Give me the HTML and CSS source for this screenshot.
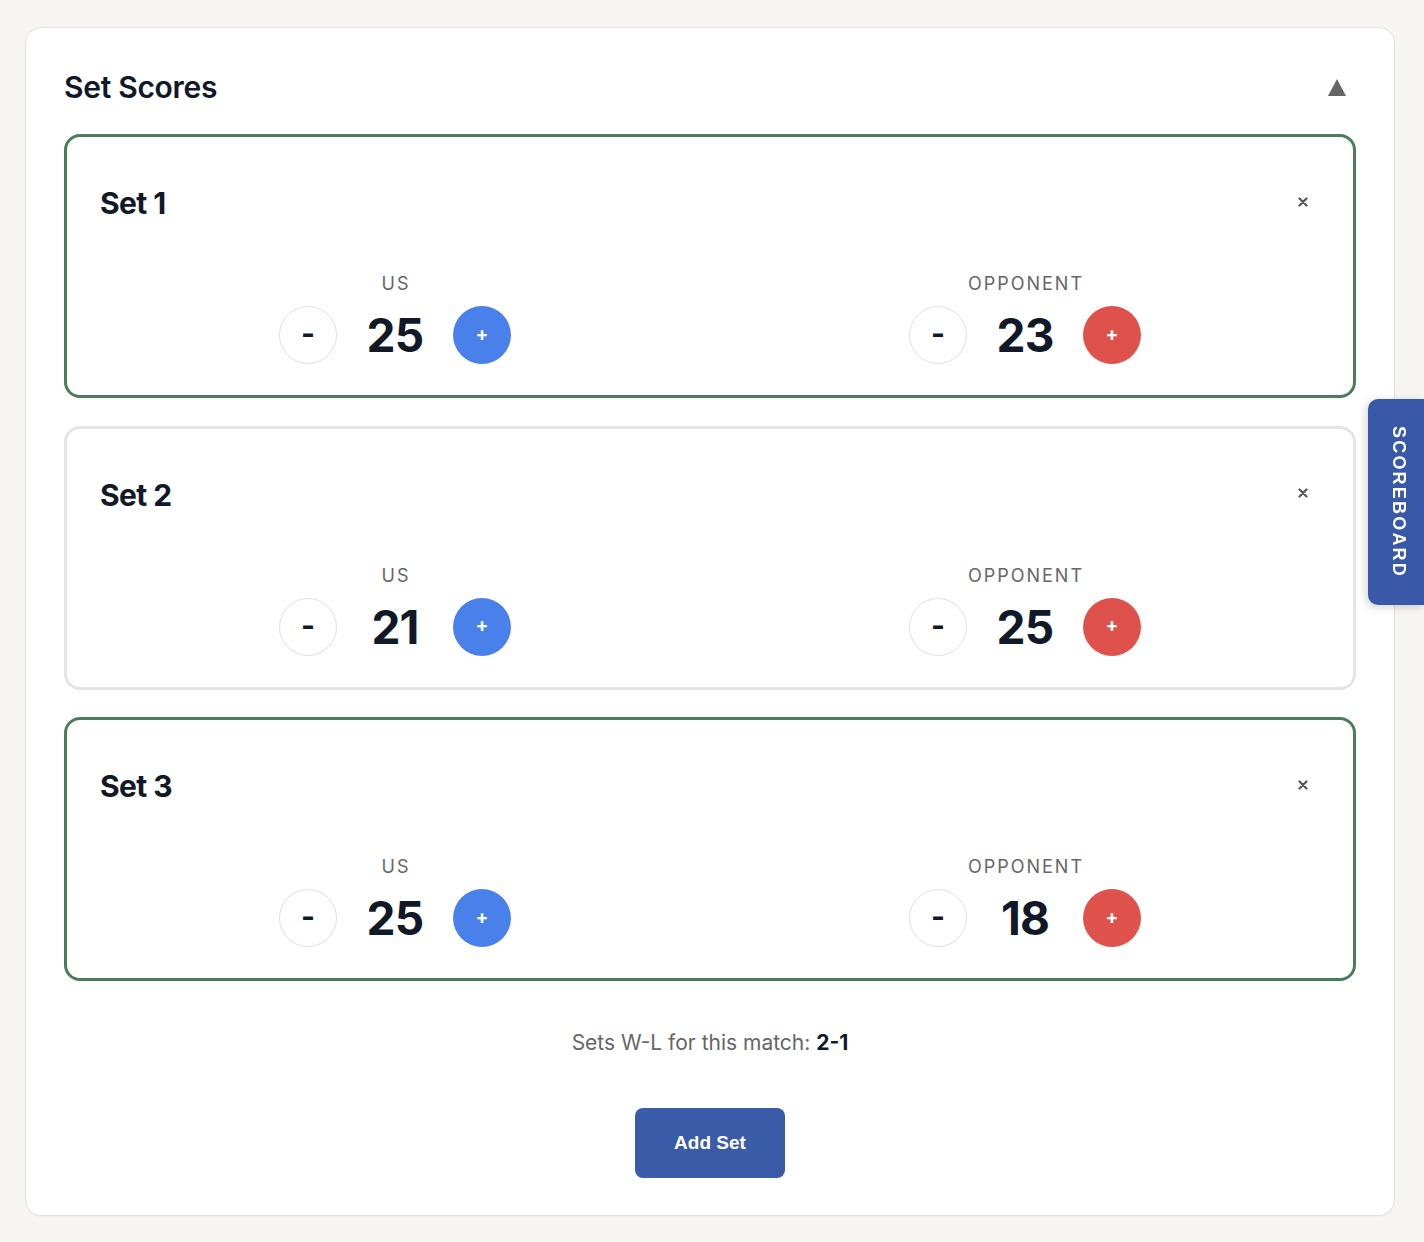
FILE: index.html
```html
<!DOCTYPE html>
<html lang="en">
<head>
<meta charset="utf-8">
<title>Set Scores</title>
<link rel="stylesheet" href="styles.css">
</head>
<body>
<main class="panel">
  <div class="panel-head">
    <h2 class="panel-title">Set Scores</h2>
    <button class="collapse-btn" aria-label="Collapse">
      <svg width="18" height="17" viewBox="0 0 18 17"><polygon points="9,0 18,17 0,17" fill="#666"/></svg>
    </button>
  </div>

  <section class="set-card won">
    <div class="set-head">
      <h3 class="set-title">Set 1</h3>
      <button class="close-btn" aria-label="Remove set"><svg width="10" height="10" viewBox="0 0 10 10"><path d="M1.5 1.5 L8.5 8.5 M8.5 1.5 L1.5 8.5" stroke="#555" stroke-width="2.2" stroke-linecap="round"/></svg></button>
    </div>
    <div class="teams">
      <div class="team">
        <div class="team-label">US</div>
        <div class="controls"><button class="btn-minus">-</button><span class="score">25</span><button class="btn-plus blue">+</button></div>
      </div>
      <div class="team">
        <div class="team-label">OPPONENT</div>
        <div class="controls"><button class="btn-minus">-</button><span class="score">23</span><button class="btn-plus red">+</button></div>
      </div>
    </div>
  </section>

  <section class="set-card">
    <div class="set-head">
      <h3 class="set-title">Set 2</h3>
      <button class="close-btn" aria-label="Remove set"><svg width="10" height="10" viewBox="0 0 10 10"><path d="M1.5 1.5 L8.5 8.5 M8.5 1.5 L1.5 8.5" stroke="#555" stroke-width="2.2" stroke-linecap="round"/></svg></button>
    </div>
    <div class="teams">
      <div class="team">
        <div class="team-label">US</div>
        <div class="controls"><button class="btn-minus">-</button><span class="score">21</span><button class="btn-plus blue">+</button></div>
      </div>
      <div class="team">
        <div class="team-label">OPPONENT</div>
        <div class="controls"><button class="btn-minus">-</button><span class="score">25</span><button class="btn-plus red">+</button></div>
      </div>
    </div>
  </section>

  <section class="set-card won">
    <div class="set-head">
      <h3 class="set-title">Set 3</h3>
      <button class="close-btn" aria-label="Remove set"><svg width="10" height="10" viewBox="0 0 10 10"><path d="M1.5 1.5 L8.5 8.5 M8.5 1.5 L1.5 8.5" stroke="#555" stroke-width="2.2" stroke-linecap="round"/></svg></button>
    </div>
    <div class="teams">
      <div class="team">
        <div class="team-label">US</div>
        <div class="controls"><button class="btn-minus">-</button><span class="score">25</span><button class="btn-plus blue">+</button></div>
      </div>
      <div class="team">
        <div class="team-label">OPPONENT</div>
        <div class="controls"><button class="btn-minus">-</button><span class="score">18</span><button class="btn-plus red">+</button></div>
      </div>
    </div>
  </section>

  <p class="summary">Sets W-L for this match: <strong>2-1</strong></p>
  <div class="actions"><button class="add-btn">Add Set</button></div>
</main>

<button class="scoreboard-tab">SCOREBOARD</button>
</body>
</html>
```

FILE: styles.css
```css
* { box-sizing: border-box; }
html, body { margin: 0; padding: 0; }
body {
  background: #f6f5f1;
  font-family: Inter, "Noto Sans", sans-serif;
  color: #111827;
  padding: 27px 29px 26px 25px;
}
button { font-family: inherit; cursor: pointer; }

.panel {
  background: #fff;
  border: 1px solid #e3e1dc;
  border-radius: 16px;
  padding: 39px 38px 37px 38px;
  box-shadow: 0 1px 2px rgba(0,0,0,0.03);
}
.panel-head {
  display: flex;
  justify-content: space-between;
  align-items: center;
  height: 40px;
  margin-bottom: 27px;
}
.panel-title {
  margin: 0;
  font-size: 30px;
  font-weight: 600;
  line-height: 40px;
  letter-spacing: -0.3px;
}
.collapse-btn {
  background: none;
  border: 0;
  padding: 0 10px 0 0;
  display: flex;
  align-items: center;
}

.set-card {
  border: 3px solid #e4e4e4;
  border-radius: 16px;
  padding: 32px 33px 31px;
  height: 264px;
  margin-bottom: 27.5px;
}
.set-card.won { border-color: #4b7d5a; }
.set-head {
  display: flex;
  justify-content: space-between;
  align-items: center;
  padding-top: 16px;
  height: 52px;
  margin-bottom: 50px;
}
.set-title {
  margin: 0;
  font-size: 30px;
  font-weight: 700;
  line-height: 36px;
  letter-spacing: -0.6px;
}
.close-btn {
  background: none;
  border: 0;
  width: 34px;
  height: 30px;
  display: flex;
  align-items: center;
  justify-content: center;
  padding: 0;
  margin-top: -3px;
}

.teams {
  display: grid;
  grid-template-columns: 1fr 1fr;
  column-gap: 40px;
}
.team {
  display: flex;
  flex-direction: column;
  align-items: center;
}
.team-label {
  font-size: 18px;
  line-height: 24px;
  color: #666;
  letter-spacing: 2px;
  margin-right: -2px;
  margin-bottom: 11px;
  margin-top: 1px;
}
.controls {
  display: flex;
  align-items: center;
  gap: 18px;
  margin-top: -1px;
}
.score {
  width: 80px;
  text-align: center;
  font-size: 46px;
  font-weight: 700;
  line-height: 58px;
  letter-spacing: -0.8px;
}
.btn-minus, .btn-plus {
  width: 58px;
  height: 58px;
  border-radius: 50%;
  display: flex;
  align-items: center;
  justify-content: center;
  padding: 0;
  font-weight: 700;
}
.btn-minus {
  background: #fff;
  border: 1px solid #e0e0e0;
  color: #111827;
  font-size: 30px;
  padding-bottom: 4px;
}
.btn-plus {
  border: 0;
  color: #fff;
  font-size: 19px;
  padding-bottom: 2px;
}
.btn-plus.blue { background: #4a80ea; }
.btn-plus.red { background: #df524c; }

.summary {
  margin: 48px 0 51px;
  text-align: center;
  font-size: 21px;
  line-height: 28px;
  color: #666;
}
.summary strong { color: #111827; font-weight: 700; }

.actions { display: flex; justify-content: center; }
.add-btn {
  width: 150px;
  height: 70px;
  background: #3a5ba8;
  color: #fff;
  border: 0;
  border-radius: 8px;
  font-family: "Liberation Sans", Arial, sans-serif;
  font-size: 19px;
  font-weight: 700;
}

.scoreboard-tab {
  position: fixed;
  right: 0;
  top: 399px;
  width: 56px;
  height: 206px;
  background: #3a58a8;
  color: #fff;
  border: 0;
  border-radius: 10px 0 0 10px;
  writing-mode: vertical-rl;
  font-family: "Liberation Sans", Arial, sans-serif;
  font-size: 18px;
  font-weight: 700;
  letter-spacing: 2.2px;
  display: flex;
  align-items: center;
  justify-content: center;
  padding: 0 0 0 4px;
  box-shadow: -2px 2px 8px rgba(0,0,0,0.18);
}
```
